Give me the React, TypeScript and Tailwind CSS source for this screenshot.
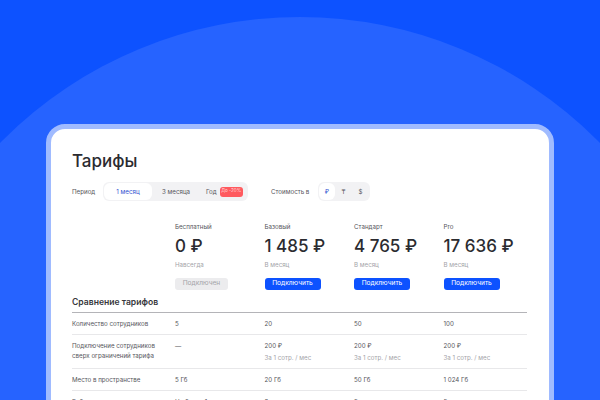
const plans = [
  { name: "Бесплатный", price: "0 ₽", term: "Навсегда", active: false },
  { name: "Базовый", price: "1 485 ₽", term: "В месяц", active: true },
  { name: "Стандарт", price: "4 765 ₽", term: "В месяц", active: true },
  { name: "Pro", price: "17 636 ₽", term: "В месяц", active: true },
];

const grid = "grid grid-cols-[103px_89.5px_89.5px_89.5px_84px]";

function Row({ label, values, sub, className }: { label: React.ReactNode; values: string[]; sub?: boolean; className: string }) {
  return (
    <div className={`${grid} border-b border-[#e8e8ea] text-[6.2px] leading-[10px] text-[#55555b] ${className}`}>
      <div>{label}</div>
      {values.map((v, i) => (
        <div key={i}>
          <div>{v}</div>
          {sub && v !== "—" && <div className="mt-[2px] text-[#a3a3a8]">За 1 сотр. / мес</div>}
        </div>
      ))}
    </div>
  );
}

export default function App() {
  return (
    <div className="relative h-[400px] w-[600px] overflow-hidden bg-[#0d52ff] font-['Inter',sans-serif]">
      <div className="absolute left-[-120px] top-[17px] h-[840px] w-[840px] rounded-full bg-[#2663ff]" />
      <div className="relative mx-auto mt-[124px] h-[300px] w-[508px] rounded-[19px] border-[5.5px] border-[#a0bbff] bg-white pl-[21px] pr-[22px] pt-[21px]">
        <h1 className="text-[17px] font-medium leading-[22px] text-[#2b2b30]">Тарифы</h1>

        <div className="mt-[10px] flex h-[19px] items-center text-[6.2px] text-[#55555b]">
          <span className="w-[31px]">Период</span>
          <div className="flex h-[19px] w-[145px] items-center rounded-[6px] bg-[#f2f2f4] p-[1px]">
            <div className="flex h-[17px] w-[48px] items-center justify-center rounded-[6px] bg-white text-[#2f4fd0]">1 месяц</div>
            <div className="ml-[10px] w-[28px] whitespace-nowrap">3 месяца</div>
            <div className="ml-[16px]">Год</div>
            <div className="ml-[3px] flex h-[10px] w-[23px] items-center justify-center rounded-[3px] bg-[#ff5a5f] text-[4.6px] text-[#ffd9da]">До -20%</div>
          </div>
          <span className="ml-[23px] w-[47px] whitespace-nowrap">Стоимость в</span>
          <div className="flex h-[19px] w-[52px] items-center rounded-[6px] bg-[#f2f2f4] p-[1px]">
            <div className="flex h-[17px] w-[16px] items-center justify-center rounded-[6px] bg-white text-[#2f4fd0]">₽</div>
            <div className="w-[17px] text-center">₸</div>
            <div className="w-[17px] text-center">$</div>
          </div>
        </div>

        <div className={`${grid} mt-[21px]`}>
          <div />
          {plans.map((p) => (
            <div key={p.name}>
              <div className="text-[6.2px] leading-[10px] text-[#55555b]">{p.name}</div>
              <div className="mt-[3px] text-[17px] font-medium leading-[22px] text-[#2b2b30]">{p.price}</div>
              <div className="mt-[3px] text-[6.2px] leading-[10px] text-[#a3a3a8]">{p.term}</div>
              <div
                className={`mt-[8px] flex h-[12px] items-center justify-center rounded-[3px] text-[6.6px] ${
                  p.active ? "w-[56px] bg-[#0d52ff] text-white" : "w-[53px] bg-[#ececee] text-[#a3a3a8]"
                }`}
              >
                {p.active ? "Подключить" : "Подключен"}
              </div>
            </div>
          ))}
        </div>

        <div className="mt-[7px] border-b border-[#b4b4b8] pb-[4px] text-[8.6px] font-semibold leading-[11px] text-[#36363b]">
          Сравнение тарифов
        </div>
        <Row label="Количество сотрудников" values={["5", "20", "50", "100"]} className="pb-[5px] pt-[6px]" />
        <Row
          label={<>Подключение сотрудников<br />сверх ограничений тарифа</>}
          values={["—", "200 ₽", "200 ₽", "200 ₽"]}
          sub
          className="pb-[5px] pt-[6px]"
        />
        <Row label="Место в пространстве" values={["5 Гб", "20 Гб", "50 Гб", "1 024 Гб"]} className="pb-[5px] pt-[6px]" />
        <div className={`${grid} pt-[6px] text-[6.2px] leading-[10px] text-[#55555b]`}>
          <div>Рабочие пространства</div>
          <div>Не более 1</div>
          <div>3</div>
          <div>5</div>
          <div>5</div>
        </div>
      </div>
    </div>
  );
}
